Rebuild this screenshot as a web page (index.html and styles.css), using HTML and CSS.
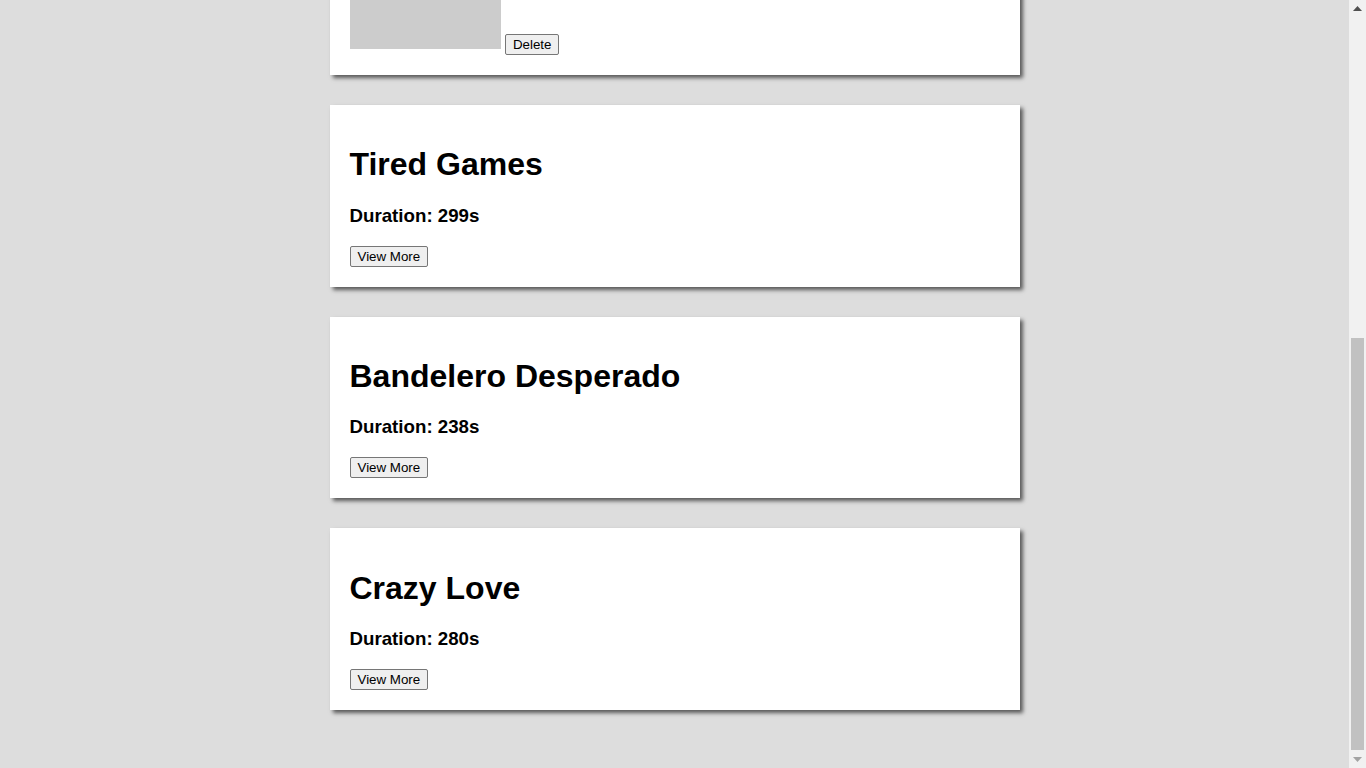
FILE: index.html
```html
<!DOCTYPE html>
<html lang="en">
<head>
<meta charset="utf-8">
<title>Songs</title>
<link rel="stylesheet" href="styles.css">
</head>
<body>
<main class="list">
  <section class="card">
    <div class="media"><span class="cover"></span> <button class="btn">Delete</button></div>
  </section>
  <section class="card">
    <h1>Tired Games</h1>
    <h3>Duration: 299s</h3>
    <button class="btn">View More</button>
  </section>
  <section class="card">
    <h1>Bandelero Desperado</h1>
    <h3>Duration: 238s</h3>
    <button class="btn">View More</button>
  </section>
  <section class="card">
    <h1>Crazy Love</h1>
    <h3>Duration: 280s</h3>
    <button class="btn">View More</button>
  </section>
</main>
<aside class="scrollbar" aria-hidden="true">
  <div class="sb-btn">
    <svg width="9" height="5" viewBox="0 0 9 5"><polygon points="0,5 9,5 4.5,0" fill="#505050"/></svg>
  </div>
  <div class="sb-track"><div class="sb-thumb"></div></div>
  <div class="sb-btn">
    <svg width="9" height="5" viewBox="0 0 9 5"><polygon points="0,0 9,0 4.5,5" fill="#a3a3a3"/></svg>
  </div>
</aside>
<script src="script.js"></script>
</body>
</html>
```
FILE: styles.css
```css
html {
  background: #dddddd;
}
body {
  margin: 8px 25px 8px 8px;
  font-family: "Liberation Sans", Arial, sans-serif;
  color: #000;
}
.list {
  padding: 20px 0;
}
.card {
  width: 650px;
  margin: 0 auto 30px;
  padding: 20px;
  background: #fff;
  box-shadow: 3px 3px 4px rgba(0, 0, 0, 0.6);
}
.card h1 {
  font-size: 32px;
  margin: 21.44px 0;
}
.card h3 {
  font-size: 18.72px;
  margin: 18.72px 0;
}
.btn {
  font-family: "Liberation Sans", Arial, sans-serif;
  font-size: 13.333px;
  padding: 2px 7px;
  background: #efefef;
  border: 1px solid #767676;
  border-radius: 2px;
  color: #000;
}
.cover {
  display: inline-block;
  width: 151px;
  height: 150px;
  background: #cccccc;
}
.scrollbar {
  position: fixed;
  top: 0;
  right: 0;
  bottom: 0;
  width: 17px;
  background: #f1f1f1;
  display: flex;
  flex-direction: column;
}
.sb-btn {
  height: 17px;
  display: flex;
  align-items: center;
  justify-content: center;
}
.sb-track {
  flex: 1;
  display: flex;
  flex-direction: column;
  justify-content: flex-end;
  padding: 0 2px 1px;
}
.sb-thumb {
  height: 412px;
  background: #c1c1c1;
}
```
FILE: script.js
```js
function toBottom() {
  window.scrollTo(0, document.documentElement.scrollHeight);
}
toBottom();
window.addEventListener('load', toBottom);
```
